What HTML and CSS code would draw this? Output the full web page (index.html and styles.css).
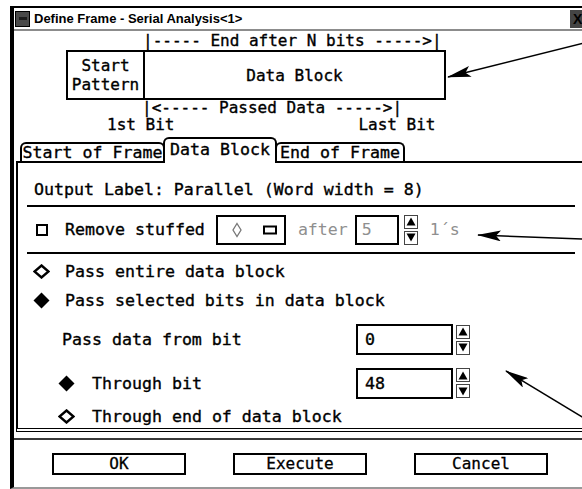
FILE: index.html
```html
<!DOCTYPE html>
<html>
<head>
  <meta charset="utf-8">
  <title>Define Frame - Serial Analysis</title>
  <link rel="stylesheet" href="styles.css">
</head>
<body>

<div class="win">
  <div class="titlebar">
    <span class="menu-btn"><span class="menu-bar"></span></span>
    <span class="title">Define Frame - Serial Analysis&lt;1&gt;</span>
    <span class="close-btn">X</span>
  </div>

  <div class="diagram">
    <div class="d-top">|----- End after N bits -----&gt;|</div>
    <div class="frame-box">
      <div class="start-cell">Start<br>Pattern</div>
      <div class="data-cell">Data Block</div>
    </div>
    <div class="d-passed">|&lt;----- Passed Data -----&gt;|</div>
    <div class="d-bits"><span class="first-bit">1st Bit</span><span class="last-bit">Last Bit</span></div>
  </div>

  <div class="tabs">
    <div class="tab tab-start">Start of Frame</div>
    <div class="tab tab-data active">Data Block</div>
    <div class="tab tab-end">End of Frame</div>
  </div>

  <div class="panel">
    <div class="row-label">Output Label: Parallel (Word width = 8)</div>
    <div class="sep"></div>

    <div class="row row-stuff">
      <span class="check"></span>
      <span class="stuff-label">Remove stuffed</span>
      <span class="pattern-box">
        <svg width="66" height="26" viewBox="0 0 66 26">
          <polygon points="19,6.5 23,13 19,19.5 15,13" fill="none" stroke="#777" stroke-width="1.3"/>
          <rect x="46" y="9.5" width="12" height="7" fill="none" stroke="#000" stroke-width="2"/>
        </svg>
      </span>
      <span class="dim after">after</span>
      <span class="field field-small dim">5</span>
      <span class="spin spin-small">
        <span class="spin-btn"><svg width="10" height="9" viewBox="0 0 10 9"><polygon points="5,0.5 9.5,8.5 0.5,8.5"/></svg></span>
        <span class="spin-btn"><svg width="10" height="9" viewBox="0 0 10 9"><polygon points="0.5,0.5 9.5,0.5 5,8.5"/></svg></span>
      </span>
      <span class="dim ones">1´s</span>
    </div>
    <div class="sep"></div>

    <div class="row row-c">
      <svg class="dia" width="17" height="15" viewBox="0 0 17 15"><polygon points="8.5,1.5 15.5,7.5 8.5,13.5 1.5,7.5" fill="#fff" stroke="#000" stroke-width="2.4"/></svg>
      <span class="opt-text">Pass entire data block</span>
    </div>
    <div class="row row-d">
      <svg class="dia" width="17" height="17" viewBox="0 0 17 17"><polygon points="8.5,0.5 16.5,8.5 8.5,16.5 0.5,8.5" fill="#000"/></svg>
      <span class="opt-text">Pass selected bits in data block</span>
    </div>

    <div class="row row-e">
      <span class="lbl-col"><span class="from-text">Pass data from bit</span></span>
      <span class="field field-wide">0</span>
      <span class="spin">
        <span class="spin-btn"><svg width="10" height="9" viewBox="0 0 10 9"><polygon points="5,0.5 9.5,8.5 0.5,8.5"/></svg></span>
        <span class="spin-btn"><svg width="10" height="9" viewBox="0 0 10 9"><polygon points="0.5,0.5 9.5,0.5 5,8.5"/></svg></span>
      </span>
    </div>
    <div class="row row-f">
      <span class="lbl-col">
        <svg class="dia dia-sub" width="17" height="17" viewBox="0 0 17 17"><polygon points="8.5,0.5 16.5,8.5 8.5,16.5 0.5,8.5" fill="#000"/></svg>
        <span class="sub-text">Through bit</span>
      </span>
      <span class="field field-wide">48</span>
      <span class="spin">
        <span class="spin-btn"><svg width="10" height="9" viewBox="0 0 10 9"><polygon points="5,0.5 9.5,8.5 0.5,8.5"/></svg></span>
        <span class="spin-btn"><svg width="10" height="9" viewBox="0 0 10 9"><polygon points="0.5,0.5 9.5,0.5 5,8.5"/></svg></span>
      </span>
    </div>
    <div class="row row-g">
      <svg class="dia dia-sub" width="17" height="15" viewBox="0 0 17 15"><polygon points="8.5,1.5 15.5,7.5 8.5,13.5 1.5,7.5" fill="#fff" stroke="#000" stroke-width="2.4"/></svg>
      <span class="sub-text">Through end of data block</span>
    </div>
  </div>

  <div class="bottom-sep"></div>
  <div class="btnrow">
    <button class="btn">OK</button>
    <button class="btn">Execute</button>
    <button class="btn">Cancel</button>
  </div>
</div>

<!-- callout arrows drawn over the dialog -->
<svg class="arrows" width="582" height="489" viewBox="0 0 582 489">
  <defs>
    <marker id="ah" viewBox="0 0 24 11" refX="23" refY="5.5" markerWidth="24" markerHeight="11" markerUnits="userSpaceOnUse" orient="auto">
      <path d="M0,0 L24,5.5 L0,11 L5,5.5 Z" fill="#000"/>
    </marker>
  </defs>
  <line x1="584" y1="43" x2="448" y2="77" stroke="#000" stroke-width="1.5" marker-end="url(#ah)"/>
  <line x1="584" y1="239" x2="478" y2="235" stroke="#000" stroke-width="1.5" marker-end="url(#ah)"/>
  <line x1="584" y1="418" x2="506" y2="371" stroke="#000" stroke-width="1.5" marker-end="url(#ah)"/>
</svg>

</body>
</html>
```

FILE: styles.css
```css
* {
  box-sizing: border-box;
}

html, body {
  margin: 0;
  padding: 0;
}

body {
  width: 582px;
  height: 489px;
  overflow: hidden;
  position: relative;
  background: #fff;
  color: #000;
  font-family: "DejaVu Sans Mono", monospace;
  font-size: 16.6px;
  -webkit-text-stroke: 0.35px currentColor;
}

.win {
  margin: 6px 0 0 10px;
  width: 580px;
  height: 483px;
  border-top: 2px solid #000;
  border-left: 4px solid #000;
  border-bottom: 2px solid #999;
  display: flex;
  flex-direction: column;
}

/* title bar */
.titlebar {
  height: 23px;
  flex: none;
  border-bottom: 2px solid #8c8c8c;
  display: flex;
  align-items: center;
  -webkit-text-stroke: 0;
}
.menu-btn {
  width: 15px;
  height: 16px;
  margin-left: 1px;
  background: #4a4a4a;
  border: 1px solid #000;
  display: flex;
  align-items: center;
  justify-content: center;
}
.menu-bar {
  width: 8px;
  height: 3px;
  background: #1c1c1c;
}
.title {
  margin-left: 4px;
  font-family: "Liberation Sans Narrow", "Liberation Sans", sans-serif;
  font-weight: bold;
  font-size: 13px;
}
.close-btn {
  margin-left: auto;
  width: 20px;
  height: 18px;
  background: #444;
  color: #000;
  font-family: "Liberation Sans", sans-serif;
  font-weight: bold;
  font-size: 14px;
  line-height: 18px;
  padding-left: 3px;
}

/* frame diagram */
.diagram {
  flex: none;
  font-size: 16px;
}
.d-top {
  height: 19px;
  line-height: 19px;
  padding-left: 129px;
  white-space: pre;
}
.frame-box {
  margin-left: 52px;
  width: 380px;
  height: 50px;
  border: 2px solid #000;
  display: flex;
}
.start-cell {
  width: 77px;
  border-right: 2px solid #000;
  line-height: 19px;
  display: flex;
  align-items: center;
  justify-content: center;
  text-align: center;
}
.data-cell {
  flex: 1;
  display: flex;
  align-items: center;
  justify-content: center;
}
.d-passed {
  height: 16px;
  line-height: 16px;
  padding-left: 128px;
  white-space: pre;
}
.d-bits {
  height: 17px;
  line-height: 17px;
  white-space: pre;
}
.first-bit {
  margin-left: 93px;
}
.last-bit {
  margin-left: 184px;
}

/* tabs */
.tabs {
  flex: none;
  height: 24px;
  margin: 4px 0 0 6px;
  display: flex;
  align-items: flex-end;
}
.tab {
  height: 19px;
  line-height: 17px;
  border: 2px solid #000;
  border-bottom: none;
  border-radius: 6px 6px 0 0;
  background: #fff;
  text-align: center;
  white-space: nowrap;
}
.tab-start {
  width: 145px;
}
.tab-data {
  width: 114px;
  margin-left: -2px;
}
.tab-end {
  width: 130px;
  margin-left: -2px;
}
.tab.active {
  height: 26px;
  line-height: 22px;
  margin-bottom: -2px;
  position: relative;
  z-index: 1;
}

/* tab panel */
.panel {
  flex: none;
  margin-left: 2px;
  width: 571px;
  height: 271px;
  border: 2px solid #000;
  border-bottom: 4px double #000;
  padding: 0 10px 0 9px;
}
.row-label {
  height: 42px;
  padding: 19px 0 0 7px;
  line-height: 16px;
  white-space: pre;
}
.sep {
  height: 2px;
  background: #000;
}
.row {
  display: flex;
  align-items: center;
  white-space: pre;
}

.row-stuff {
  height: 45px;
}
.check {
  width: 12px;
  height: 12px;
  margin-left: 9px;
  border: 2px solid #000;
}
.stuff-label {
  margin-left: 17px;
}
.pattern-box {
  margin-left: 11px;
  width: 70px;
  height: 30px;
  border: 2px solid #000;
  display: flex;
}
.dim {
  color: #8f8f8f;
  -webkit-text-stroke: 0;
}
.after {
  margin-left: 12px;
}
.field {
  border: 2px solid #000;
  display: flex;
  align-items: center;
}
.field-small {
  margin-left: 7px;
  width: 44px;
  height: 30px;
  padding-left: 5px;
}
.field-wide {
  width: 97px;
  height: 31px;
  padding-left: 7px;
}
.spin {
  margin-left: 3px;
  display: flex;
  flex-direction: column;
  gap: 2px;
}
.spin-small {
  margin-left: 5px;
}
.spin-btn {
  width: 14px;
  height: 14px;
  border: 1px solid #444;
  background: #fff;
  display: flex;
  align-items: center;
  justify-content: center;
}
.spin-btn polygon {
  fill: #000;
}
.ones {
  margin-left: 12px;
}

.row-c {
  height: 34px;
}
.row-d {
  height: 24px;
}
.dia {
  margin-left: 6px;
  flex: none;
}
.opt-text {
  margin-left: 15px;
}

.row-e {
  height: 55px;
}
.row-f {
  height: 32px;
}
.lbl-col {
  width: 329px;
  display: flex;
  align-items: center;
}
.from-text {
  margin-left: 35px;
}
.dia-sub {
  margin-left: 31px;
}
.sub-text {
  margin-left: 17px;
}
.row-g {
  height: 29px;
  padding-top: 5px;
}

/* bottom buttons */
.bottom-sep {
  flex: none;
  height: 2px;
  margin-top: 6px;
  background: #3a3a3a;
}
.btnrow {
  flex: none;
  height: 47px;
  padding: 13px 0 0 38px;
  display: flex;
  align-items: flex-start;
  gap: 47px;
}
.btn {
  width: 134px;
  height: 22px;
  border: 2px solid #000;
  border-radius: 0;
  background: #fff;
  color: #000;
  font-family: "DejaVu Sans Mono", monospace;
  font-size: 16px;
  line-height: 16px;
  padding: 0;
  -webkit-text-stroke: 0.3px #000;
}

.arrows {
  position: absolute;
  left: 0;
  top: 0;
  pointer-events: none;
}
```
